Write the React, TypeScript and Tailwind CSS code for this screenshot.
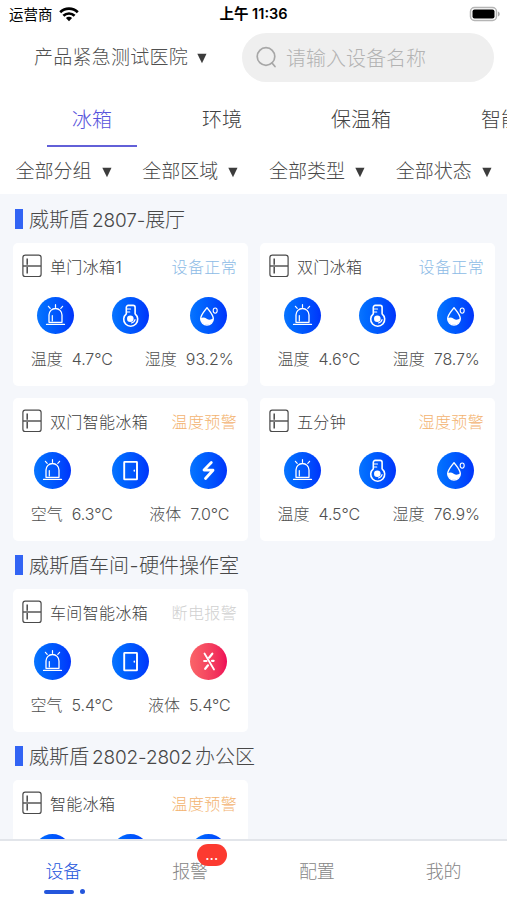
import type { ReactNode } from 'react';

type Kind = 'alarm' | 'thermo' | 'drop' | 'door' | 'bolt' | 'cut';

type Reading = { label: string; value: string };

type Device = {
  name: string;
  status: string;
  tone: string;
  icons: Kind[];
  readings: Reading[];
};

const NORMAL = 'text-[#8dbbe6]';
const WARN = 'text-[#f3b370]';
const OFF = 'text-[#d0d0d0]';

const groups: { title: ReactNode; devices: Device[] }[] = [
  {
    title: <>威斯盾<Num>2807-</Num>展厅</>,
    devices: [
      { name: '单门冰箱1', status: '设备正常', tone: NORMAL, icons: ['alarm', 'thermo', 'drop'], readings: [{ label: '温度', value: '4.7°C' }, { label: '湿度', value: '93.2%' }] },
      { name: '双门冰箱', status: '设备正常', tone: NORMAL, icons: ['alarm', 'thermo', 'drop'], readings: [{ label: '温度', value: '4.6°C' }, { label: '湿度', value: '78.7%' }] },
      { name: '双门智能冰箱', status: '温度预警', tone: WARN, icons: ['alarm', 'door', 'bolt'], readings: [{ label: '空气', value: '6.3°C' }, { label: '液体', value: '7.0°C' }] },
      { name: '五分钟', status: '湿度预警', tone: WARN, icons: ['alarm', 'thermo', 'drop'], readings: [{ label: '温度', value: '4.5°C' }, { label: '湿度', value: '76.9%' }] },
    ],
  },
  {
    title: <>威斯盾车间<span className="inline-block w-[10px] text-center">-</span>硬件操作室</>,
    devices: [
      { name: '车间智能冰箱', status: '断电报警', tone: OFF, icons: ['alarm', 'door', 'cut'], readings: [{ label: '空气', value: '5.4°C' }, { label: '液体', value: '5.4°C' }] },
    ],
  },
  {
    title: <>威斯盾<Num>2802-2802</Num><span className="ml-[3px]">办公区</span></>,
    devices: [
      { name: '智能冰箱', status: '温度预警', tone: WARN, icons: ['alarm', 'door', 'bolt'], readings: [{ label: '空气', value: '4.9°C' }, { label: '液体', value: '5.1°C' }] },
    ],
  },
];

function Num({ children }: { children: ReactNode }) {
  return <span className="ml-[3px] text-[19px] tracking-[-0.150px]">{children}</span>;
}

function Caret() {
  return (
    <svg width="10" height="11" viewBox="0 0 10 11" className="shrink-0 fill-[#3c3c3c]">
      <path d="M0.3 0.8h9.2L5 10.2z" />
    </svg>
  );
}

function Glyph({ kind }: { kind: Kind }) {
  switch (kind) {
    case 'alarm':
      return (
        <>
          <path d="M12 25.300V18a6.500 6.500 0 0 1 13 0v7.300z" strokeWidth="1.300" />
          <path d="M9.600 27.400h17.800" strokeWidth="1.400" />
          <path d="M15.300 24v-5.500M18.500 7.700v2.600M11.400 9.300l1.800 2M25.600 9.300l-1.800 2" strokeWidth="1.200" />
        </>
      );
    case 'thermo':
      return (
        <>
          <path d="M14.300 16.800V10.400a2 2 0 0 1 2-2h4.800a2 2 0 0 1 2 2v6.400a7 7 0 1 1-8.800 0z" strokeWidth="1.600" />
          <path d="M14.500 12h4M14.500 15h3.200" strokeWidth="1.200" />
          <circle cx="18.300" cy="21.700" r="3.300" fill="white" stroke="none" />
          <path d="M19.400 26a4.600 4.600 0 0 0 3.600-3.400" strokeWidth="1.200" />
        </>
      );
    case 'drop':
      return (
        <>
          <path d="M17 10.700c-2.500 3.400-6.300 7-6.300 11.100a6.300 6.300 0 0 0 12.600 0c0-4.100-3.800-7.700-6.300-11.100z" strokeWidth="1.400" />
          <path d="M10.700 21.300c2.200-1.300 4.200-.7 6 .5 2.100 1.300 4.300 1 6.600-.3a6.300 6.300 0 1 1-12.600-.2z" fill="white" stroke="none" />
          <ellipse cx="25.200" cy="13.600" rx="2" ry="2.600" strokeWidth="1.100" />
        </>
      );
    case 'door':
      return (
        <>
          <rect x="12.200" y="9.900" width="12.800" height="17.500" rx="0.500" strokeWidth="1.900" />
          <path d="M22.300 18.300v.8" strokeWidth="1.500" />
        </>
      );
    case 'bolt':
      return <path d="M21.300 10.500l-7.300 7.500 9 .2-7.500 8.300" strokeWidth="2.800" />;
    case 'cut':
      return (
        <>
          <path d="M14.500 10.500l9.500 16" strokeWidth="1.800" />
          <path d="M22.300 10.700l-3.200 4M14.200 18h2.300M22 17.800h1.600M18 22.300l-2.800 3.500" strokeWidth="2.200" />
        </>
      );
  }
}

function RoundIcon({ kind }: { kind: Kind }) {
  const tone = kind === 'cut' ? 'from-[#fa6468] to-[#ee0557]' : 'from-[#0a74ff] to-[#0234fb]';
  return (
    <div className={`h-[37px] w-[37px] shrink-0 rounded-full bg-linear-to-r ${tone}`}>
      <svg viewBox="0 0 37 37" width="37" height="37" fill="none" stroke="white" strokeLinecap="round" strokeLinejoin="round">
        <Glyph kind={kind} />
      </svg>
    </div>
  );
}

function FridgeIcon() {
  return (
    <svg width="20" height="24" viewBox="0 0 20 24" fill="none" stroke="#4a4a4a" className="shrink-0">
      <rect x="0.900" y="1.100" width="18.200" height="21.400" rx="2.300" strokeWidth="1.200" />
      <path d="M1 12h18" strokeWidth="1.400" />
      <path d="M5.200 4.500v6.200M5.200 13v6.500" strokeWidth="1.500" />
    </svg>
  );
}

function DeviceCard({ device }: { device: Device }) {
  const narrow = device.icons[1] === 'door';
  return (
    <div className="h-[143px] w-[235px] rounded-[5px] bg-white">
      <div className="flex h-[46px] items-center pr-[11px] pl-[9px] text-[16px] tracking-[0.350px]">
        <FridgeIcon />
        <span className="ml-[8px] pt-[1px] text-[#3f3f3f]">{device.name}</span>
        <span className={`ml-auto pt-[1px] ${device.tone}`}>{device.status}</span>
      </div>
      <div className={`mt-[8px] grid justify-start pl-[21px] ${narrow ? 'grid-cols-[78px_78px_37px]' : 'grid-cols-[78px_78px_37px]'}`}>
        {device.icons.map((kind, i) => (
          <div key={kind} className={i === 0 && !narrow ? 'pl-[3px]' : ''}>
            <RoundIcon kind={kind} />
          </div>
        ))}
      </div>
      <div className="mt-[12px] grid grid-cols-2 text-[16px] leading-[26px] text-[#505050]">
        {device.readings.map((r) => (
          <div key={r.label} className="flex items-center justify-center gap-[9px]">
            <span>{r.label}</span>
            <span className="tracking-[-0.100px]">{r.value}</span>
          </div>
        ))}
      </div>
    </div>
  );
}

const filters = ['全部分组', '全部区域', '全部类型', '全部状态'];

export default function App() {
  return (
    <div className="flex h-screen w-[507px] flex-col overflow-hidden bg-[#f5f7fb] font-['Inter','Noto_Sans_CJK_SC',sans-serif] font-light whitespace-nowrap">
      <header className="shrink-0 bg-white">
        <div className="grid h-[28px] grid-cols-3 items-center px-[9px] text-[14.500px] font-normal text-black">
          <div className="flex h-[26px] items-center gap-[6px]">
            <span className="pt-[1px]">运营商</span>
            <svg width="20" height="15" viewBox="0 0 20 15" fill="none" stroke="black" strokeWidth="2.700">
              <path d="M1.200 5.300a12.600 12.600 0 0 1 17.600 0M4.400 8.700a8.200 8.200 0 0 1 11.200 0" />
              <path d="M10 14.200l-3.100-3.100a4.400 4.400 0 0 1 6.200 0z" fill="black" stroke="none" />
            </svg>
          </div>
          <div className="text-center font-semibold">上午 11:36</div>
          <svg width="32" height="16" viewBox="0 0 32 16" className="-mt-[1px] -mr-[3px] justify-self-end">
            <rect x="1.500" y="1.500" width="26" height="13" rx="4" fill="white" stroke="#b5b5b5" strokeWidth="1.500" />
            <rect x="3.500" y="3.500" width="22" height="9" rx="2" fill="black" />
            <path d="M29 5.500c2.300 1 2.300 4 0 5z" fill="#aaa" />
          </svg>
        </div>

        <div className="flex h-[59px] items-center pr-[13px] pb-[1px] pl-[34px]">
          <span className="pt-[3px] text-[19px] tracking-[0.250px] text-[#505050]">产品紧急测试医院</span>
          <span className="ml-[9px] pt-[2px]"><Caret /></span>
          <div className="ml-auto flex h-[49px] w-[252px] items-center rounded-full bg-[#efefef] pl-[14px]">
            <svg width="21" height="22" viewBox="0 0 21 22" fill="none" stroke="#a7a7a7" strokeWidth="1.700" strokeLinecap="round">
              <circle cx="10" cy="10.500" r="8.800" />
              <path d="M16 17l3 3.500" />
            </svg>
            <span className="ml-[9px] pt-[3px] text-[20px] text-[#b3b3b3]">请输入设备名称</span>
          </div>
        </div>

        <nav className="flex h-[60px] w-[560px] text-[20px] leading-[58px] text-[#414141]">
          <div className="ml-[47px] w-[90px] border-b-2 border-[#6260d8] pt-[4px] text-center text-[#5753dc]">冰箱</div>
          <div className="ml-[65px] pt-[4px]">环境</div>
          <div className="ml-[89px] pt-[4px]">保温箱</div>
          <div className="ml-[90px] pt-[4px]">智能</div>
        </nav>

        <div className="grid h-[47px] grid-cols-4">
          {filters.map((f) => (
            <div key={f} className="flex items-center gap-[10px] pt-[4px] pl-[15.500px] text-[19px] text-[#484848]">
              <span>{f}</span>
              <Caret />
            </div>
          ))}
        </div>
      </header>

      <main className="min-h-0 flex-1 overflow-hidden px-[13px] pt-[1px]">
        {groups.map((g, i) => (
          <section key={i}>
            <h2 className="flex h-[48px] items-center pl-[2px] text-[20px] text-[#484848]">
              <span className="mr-[6px] h-[20px] w-[8px] bg-[#3264f4]" />
              <span className="pt-[2px]">{g.title}</span>
            </h2>
            <div className="grid grid-cols-[235px_235px] gap-[12px]">
              {g.devices.map((d) => (
                <DeviceCard key={d.name} device={d} />
              ))}
            </div>
          </section>
        ))}
      </main>

      <footer className="grid h-[61px] shrink-0 grid-cols-4 border-t-2 border-[#e2e5ea] bg-white text-center text-[18px] leading-[57px] text-[#868686]">
        <div className="relative pt-[2px] text-[#2455dc]">
          设备
          <span className="absolute bottom-[6px] left-[44px] h-[4px] w-[30px] rounded-full bg-[#2456dc]" />
          <span className="absolute bottom-[6px] left-[80px] h-[5px] w-[5px] rounded-full bg-[#2456dc]" />
        </div>
        <div className="relative pt-[2px]">
          报警
          <span className="absolute top-[3px] left-[70px] h-[22px] w-[30px] rounded-full bg-[#fc3a30] text-[15px] leading-[22px] font-normal text-white">...</span>
        </div>
        <div className="pt-[2px]">配置</div>
        <div className="pt-[2px]">我的</div>
      </footer>
    </div>
  );
}
